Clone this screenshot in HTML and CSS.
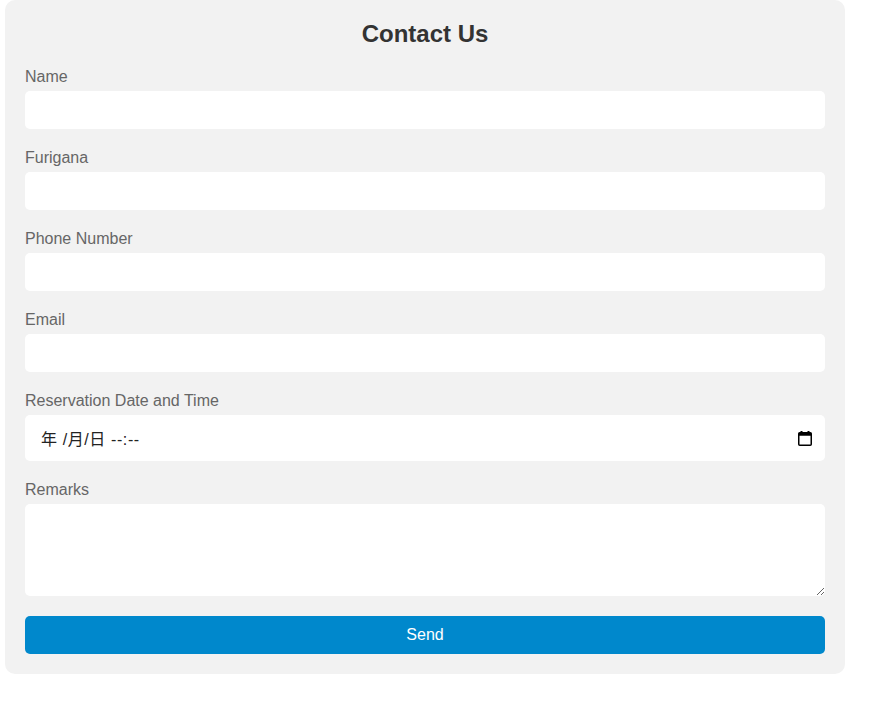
FILE: index.html
```html
<!DOCTYPE html>
<html lang="en">
<head>
    <meta charset="UTF-8">
    <meta name="viewport" content="width=device-width, initial-scale=1.0">
    <title>Contact Us</title>
    <link rel="stylesheet" href="styles.css">
</head>
<body>
    <form class="contact-form">
        <h2>Contact Us</h2>
        <div class="form-group">
            <label for="name">Name</label>
            <input type="text" id="name" class="field">
        </div>
        <div class="form-group">
            <label for="furigana">Furigana</label>
            <input type="text" id="furigana" class="field">
        </div>
        <div class="form-group">
            <label for="phone">Phone Number</label>
            <input type="tel" id="phone" class="field">
        </div>
        <div class="form-group">
            <label for="email">Email</label>
            <input type="email" id="email" class="field">
        </div>
        <div class="form-group">
            <label for="reservation">Reservation Date and Time</label>
            <div class="field datetime" id="reservation">
                <span class="datetime-text">年 /月/日 --:--</span>
                <svg class="calendar-icon" width="14" height="15" viewBox="0 0 14 15">
                    <rect x="2.5" y="0" width="2" height="3" fill="#000"/>
                    <rect x="9.5" y="0" width="2" height="3" fill="#000"/>
                    <rect x="0.75" y="1.75" width="12.5" height="12.5" rx="1" fill="none" stroke="#000" stroke-width="1.5"/>
                    <rect x="0.75" y="1.75" width="12.5" height="3" fill="#000"/>
                </svg>
            </div>
        </div>
        <div class="form-group">
            <label for="remarks">Remarks</label>
            <textarea id="remarks" class="field remarks"></textarea>
        </div>
        <button type="button" class="send-btn">Send</button>
    </form>
</body>
</html>
```

FILE: styles.css
```css
body {
    margin: 0;
    font-family: "Liberation Sans", Arial, sans-serif;
    background: #fff;
}

.contact-form {
    width: 800px;
    margin: 0 0 0 5px;
    padding: 20px;
    background: #f2f2f2;
    border-radius: 10px;
}

.contact-form h2 {
    margin: 0 0 20px;
    text-align: center;
    font-size: 24px;
    color: #333;
}

.form-group {
    margin-bottom: 20px;
}

.form-group label {
    display: block;
    margin-bottom: 5px;
    font-size: 16px;
    color: #666;
}

.field {
    display: block;
    width: 100%;
    box-sizing: border-box;
    height: 38px;
    padding: 10px;
    border: none;
    border-radius: 5px;
    background: #fff;
    font-family: "Liberation Sans", Arial, sans-serif;
    font-size: 16px;
    outline: none;
}

.datetime {
    display: flex;
    align-items: center;
    justify-content: space-between;
    height: 46px;
    padding: 0 13px 0 16px;
}

.datetime-text {
    font-family: "Liberation Sans", "Noto Sans CJK SC", sans-serif;
    font-size: 16px;
    letter-spacing: 0.6px;
    color: #222;
}

.calendar-icon {
    display: block;
}

.remarks {
    height: 92px;
    resize: vertical;
}

.send-btn {
    display: block;
    width: 100%;
    height: 38px;
    border: none;
    border-radius: 5px;
    background: #0088cc;
    color: #fff;
    font-family: "Liberation Sans", Arial, sans-serif;
    font-size: 16px;
    cursor: pointer;
}
```
